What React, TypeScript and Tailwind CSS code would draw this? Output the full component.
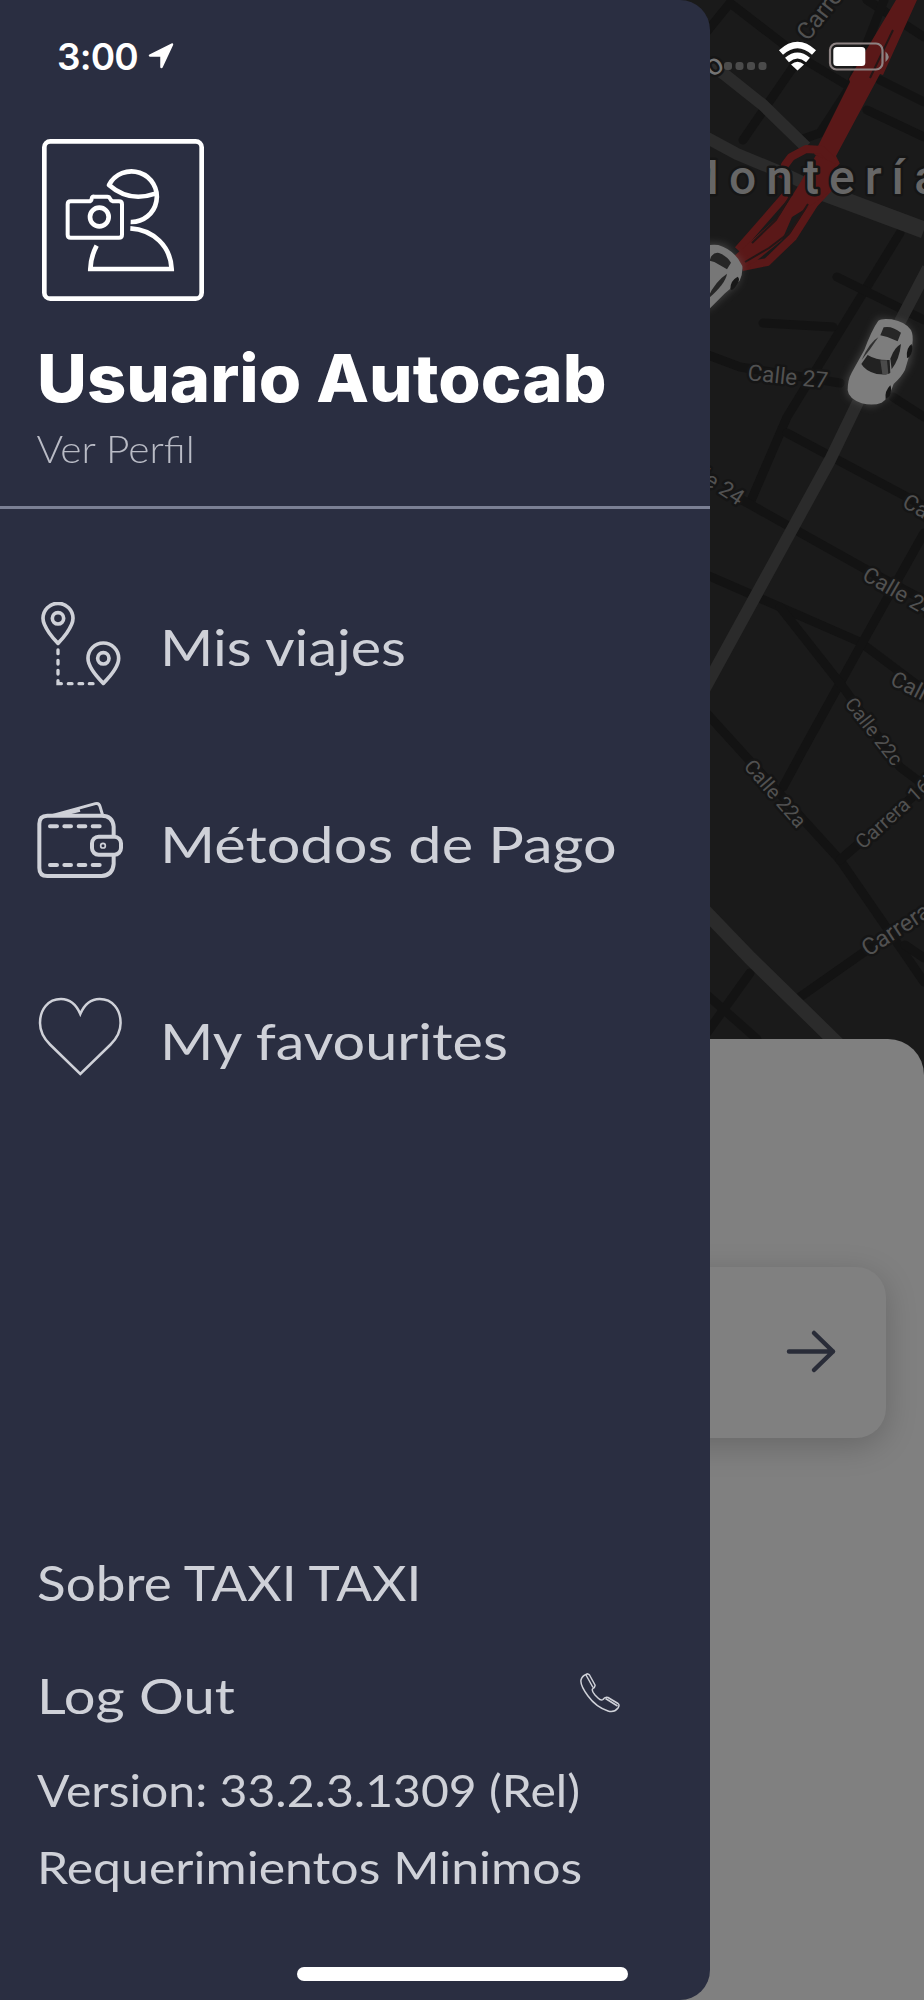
import React from "react";
import { clsx } from "clsx";

const darkStreets = [
  "M700 40L730 3L800 57L850 87",
  "M800 57L743 140",
  "M867 0L924 37",
  "M884 0L850 87L820 133L800 140",
  "M880 80L924 102",
  "M867 110L924 137",
  "M900 233L787 417L750 503",
  "M837 277L924 320",
  "M763 323L833 327",
  "M700 352L740 367L840 383",
  "M893 397L924 417",
  "M787 433L907 497L924 506",
  "M735 496L867 570L924 600",
  "M700 572L860 642L924 690",
  "M924 533L860 647L803 750L783 787",
  "M780 607L843 687L900 767L924 785",
  "M700 706L840 860L900 947L924 982",
  "M840 860L924 787",
  "M800 997L867 950L924 912",
  "M750 973L706 1034",
  "M706 994L757 1039",
  "M905 945L924 958",
];

interface StreetLabel {
  text: string;
  x: number;
  y: number;
  angle: number;
  size: number;
  end?: boolean;
}

const labels: StreetLabel[] = [
  { text: "Carrera", x: 808, y: 42, angle: -52, size: 24 },
  { text: "Calle 27", x: 747, y: 380, angle: 6, size: 22.5 },
  { text: "Calle 24", x: 738, y: 506, angle: 33, size: 22, end: true },
  { text: "Calle 25", x: 901, y: 506, angle: 30, size: 22 },
  { text: "Calle 24", x: 861, y: 579, angle: 30, size: 22 },
  { text: "Calle 23", x: 889, y: 684, angle: 27, size: 22 },
  { text: "Calle 22c", x: 844, y: 704, angle: 52, size: 19.5 },
  { text: "Calle 22a", x: 743, y: 767, angle: 49, size: 20 },
  { text: "Carrera 16b", x: 863, y: 850, angle: -42, size: 20 },
  { text: "Carrera", x: 868, y: 957, angle: -33, size: 23.5 },
];

// Both cars are seen from above, heading down and to the left
const Cars = () => (
  <g transform="translate(705 230) scale(0.3333)">
    <g fill="#777" opacity="0.45" filter="url(#glow)">
      <path d="M0 40L60 45L112 100L100 160L0 245Z" />
      <path d="M520 265L600 280L628 320L615 400L550 500L500 530L430 500L425 450L480 350Z" />
    </g>
    <path d="M-30 60Q10 40 40 45Q90 60 112 108Q114 130 104 152L60 190L0 250H-40Z" fill="#777" />
    <path d="M18 80Q28 66 42 69Q66 78 78 98L66 118Q46 106 28 96L14 92Z" fill="#262626" />
    <path d="M10 200Q30 155 66 131Q62 160 12 204Z" fill="#262626" />
    <path d="M76 176Q76 152 98 140Q106 146 98 160Q88 178 80 180Z" fill="#171717" />
    <path
      d="M520 272Q530 264 560 268Q602 276 618 300Q626 316 622 345L600 420Q590 440 566 462Q552 505 530 518Q505 528 470 520Q430 505 428 480Q428 450 440 428L478 360Q500 300 520 272Z"
      fill="#7d7d7d"
    />
    <path d="M536 292Q560 286 588 308L578 334Q552 320 526 316Z" fill="#262626" />
    <path d="M520 322Q494 336 470 390Q498 356 520 322Z" fill="#303030" />
    <path d="M488 375Q515 392 554 390L556 428Q550 436 515 432Q482 424 469 402Z" fill="#222" />
    <path d="M526 391H546L550 432H532Z" fill="#4a4a4a" />
    <path d="M588 342Q568 352 556 386L560 418Q584 386 588 342Z" fill="#222" />
    <path d="M606 384Q602 354 620 342Q626 366 612 382Z" fill="#151515" />
    <path d="M542 508Q538 484 556 466Q562 478 554 498Z" fill="#151515" />
  </g>
);

const CityMap = () => (
  <svg className="block h-[1080px] w-full shrink-0" viewBox="0 0 924 1080">
    <defs>
      <filter id="glow" x="-50%" y="-50%" width="200%" height="200%">
        <feGaussianBlur stdDeviation="12" />
      </filter>
    </defs>
    <rect width="924" height="1080" fill="#1a1a1a" />
    <g fill="none" stroke="#131313" strokeWidth="9" strokeLinejoin="round" strokeLinecap="round">
      {darkStreets.map((d) => (
        <path key={d} d={d} />
      ))}
    </g>
    <g fill="none" stroke="#2b2b2b" strokeLinejoin="round">
      <path d="M710 64L724 74L763 105L806 147" strokeWidth="12" />
      <path d="M700 134L737 154L783 173L833 197" strokeWidth="12" />
      <path d="M822 192L924 230" strokeWidth="17" />
      <path d="M928 268L859 400L830 460L704 690" strokeWidth="12" />
      <path d="M700 906L750 958L838 1044" strokeWidth="14" />
    </g>
    <g fill="#5a1818">
      <path d="M896 0H917L883 75L880 74L836 156L840 164L824 160L814 154L850 82L849 79Z" />
      <path
        d="M783 178L785 165L791 157L806 149L822 150L835 163L826 172L829 188L814 204L793 237L767 262L742 267M786 195L738 250"
        fill="none"
        stroke="#5a1818"
        strokeWidth="8"
        strokeLinejoin="round"
      />
      <path d="M816 155L836 164L828 174L829 192L813 204L792 217L782 240L755 262L738 270L732 258L780 215L800 183Z" />
    </g>
    <path
      d="M752 243L776 220L790 196M745 262L769 248L790 232L808 204M870 78L893 30"
      stroke="#241616"
      strokeWidth="2"
      fill="none"
    />
    <Cars />
    <g
      className="font-[Roboto,sans-serif]"
      fill="#515151"
      stroke="#151515"
      strokeWidth="5"
      strokeLinejoin="round"
      paintOrder="stroke"
    >
      {labels.map((l) => (
        <text
          key={l.x}
          transform={`translate(${l.x} ${l.y}) rotate(${l.angle})`}
          fontSize={l.size}
          textAnchor={l.end ? "end" : "start"}
        >
          {l.text}
        </text>
      ))}
      <text transform="translate(712 78) rotate(-35)" fontSize="30" fill="#747474">
        o
      </text>
      <text x="677" y="194" fontSize="48" fontWeight="500" letterSpacing="10" fill="#666">
        Montería
      </text>
    </g>
  </svg>
);

const StatusBar = () => (
  <div className="absolute inset-x-0 top-0 flex h-28 items-center pl-[57px] text-white">
    <span className="w-[82px] font-[Inter,sans-serif] text-[37px] font-semibold leading-none tracking-[-0.8px]">3:00</span>
    <svg className="ml-[9px] h-[26px] w-[26px]" viewBox="0 0 26 26" fill="currentColor">
      <path
        d="M24 1.500L2 12.500H13.500V24Z"
        stroke="currentColor"
        strokeWidth="2.500"
        strokeLinejoin="round"
      />
    </svg>
    <svg className="ml-auto h-[36px] w-[204px]" viewBox="720 38 204 36">
      <g fill="#4b4b4b">
        <rect x="724" y="62" width="8" height="8" rx="3" />
        <rect x="735.500" y="62" width="8" height="8" rx="3" />
        <rect x="747" y="62" width="8" height="8" rx="3" />
        <rect x="758.500" y="62" width="8" height="8" rx="3" />
      </g>
      <g fill="none" stroke="white" strokeWidth="6">
        <path d="M781 52.500Q797.500 37.500 814 52.500" />
        <path d="M787 60Q797.500 51 808 60" />
      </g>
      <path d="M791 64.500Q797.500 59 804 64.500L797.500 70.500Z" fill="white" />
      <rect x="830" y="43.500" width="52.500" height="26" rx="6.500" fill="none" stroke="#8d8383" strokeWidth="2.200" />
      <rect x="833.300" y="47" width="32" height="19" rx="3.500" fill="white" />
      <path d="M885.500 51.500Q892 57 885.500 62Z" fill="#8d8383" />
    </svg>
  </div>
);

const AvatarIcon = () => (
  <svg
    className="size-[162px]"
    viewBox="126 418 486 486"
    fill="none"
    stroke="white"
    strokeWidth="14"
  >
    <rect x="133" y="425" width="472" height="472" rx="18" />
    <path d="M392 667A76 76 0 1 0 327 556C370 594 420 598 466 582" strokeLinejoin="round" />
    <path d="M391 686C460 690 512 740 515 808H271C272 780 278 760 290 738" />
    <path
      d="M203 614q0-9 9-9H266q8 0 9-8t8-6H322q6 0 8 6t9 8H357q9 0 9 9V705q0 9-9 9H212q-9 0-9-9Z"
      strokeWidth="12"
    />
    <circle cx="298" cy="652" r="28" />
  </svg>
);

const TripsIcon = () => (
  <svg className="size-[90px]" viewBox="105 64 270 270" fill="none" stroke="currentColor" strokeWidth="11">
    <path d="M174 188C164 178 129 140 129 113A45 45 0 0 1 219 113C219 140 184 178 174 188Z" strokeLinejoin="round" />
    <circle cx="174" cy="113" r="17" />
    <path d="M310 308C300 298 264 260 264 233A46 46 0 0 1 356 233C356 260 320 298 310 308Z" strokeLinejoin="round" />
    <circle cx="310" cy="233" r="17" />
    <path
      d="M174 208V219M174 239V250M174 269V280M174 300V309H184M205 309H216M237 309H248M268 309H279"
      strokeLinecap="round"
      strokeWidth="10"
    />
  </svg>
);

const WalletIcon = () => (
  <svg className="size-[90px]" viewBox="105 655 270 270" fill="none" stroke="currentColor" strokeWidth="12">
    <path d="M341 765V738Q338 705 305 705H142Q118 705 118 729V862Q118 886 142 886H305Q338 884 341 850V826" />
    <path d="M158 704L286 669Q297 666 300 677L308 704M180 704L240 689" strokeWidth="9" />
    <rect x="276" y="768" width="87" height="54" rx="20" />
    <circle cx="309" cy="795" r="7" strokeWidth="5" />
    <path
      d="M150 737H171M193 737H213M236 737H256M278 737H299M150 853H171M193 853H213M236 853H256M278 853H299"
      strokeLinecap="round"
    />
  </svg>
);

const HeartIcon = () => (
  <svg className="size-[90px]" viewBox="0 0 90 90" fill="none" stroke="currentColor" strokeWidth="2.500">
    <path d="M45.300 18C41 8 34 3 26 3C13 3 5 13.500 5 27C5 36 9 42.500 15 48.500L45.300 78L75.600 48.500C81.600 42.500 85.600 36 85.600 27C85.600 13.500 77.600 3 64.600 3C56.600 3 49.600 8 45.300 18Z" />
  </svg>
);

const PhoneIcon = () => (
  <svg className="mb-1 h-10 w-10" viewBox="0 0 40 40" fill="none" stroke="currentColor" strokeWidth="1.500" strokeLinejoin="round">
    <path d="M6 1.500Q8 0 9.500 2L15 12Q15.500 14 12.500 16Q11.500 18 15 22L18 25Q21 28 23 26.500Q25 23.500 28 24.500L38 30.500Q40 32 38 35Q34 40 28 38Q16 34 8 23Q0 12 1 7Q2 3 6 1.500Z" />
    <path d="M6 2L13 14.500M25.500 25.500L37.500 33" />
  </svg>
);

const menuItems = [
  { label: "Mis viajes", icon: <TripsIcon />, stretch: "scale-x-[1.127]" },
  { label: "Métodos de Pago", icon: <WalletIcon />, stretch: "scale-x-[1.166]" },
  { label: "My favourites", icon: <HeartIcon />, stretch: "scale-x-[1.128]" },
];

const Drawer = () => (
  <aside className="relative col-start-1 row-start-1 flex h-[2000px] w-[710px] flex-col overflow-hidden rounded-r-[30px] bg-[#2a2e41] pt-[139px] text-[#cfd1d8]">
    <div className="pl-[42px]">
      <AvatarIcon />
    </div>
    <h1 className="ml-[37px] mt-[37px] origin-left scale-x-[1.04] whitespace-nowrap font-[Inter,sans-serif] text-[66px] font-extrabold leading-[80px] text-white">
      Usuario Autocab
    </h1>
    <p className="mt-1.5 origin-left scale-x-[1.07] pl-[34px] text-[38px] font-light leading-[48px] text-[#b9bbc5]">Ver Perfil</p>
    <div className="mt-[34px] h-[3px] shrink-0 bg-[#7b8094]" />

    <nav className="pt-[39px]">
      {menuItems.map((item) => (
        <a key={item.label} className="flex h-[197px] items-center pl-[35px]">
          {item.icon}
          <span className={clsx("ml-[35px] origin-left whitespace-nowrap text-[51px] leading-[60px]", item.stretch)}>
            {item.label}
          </span>
        </a>
      ))}
    </nav>

    <footer className="mt-auto whitespace-nowrap pb-[106px] pl-[37px]">
      <p className="origin-left scale-x-[1.083] text-[49px] leading-[60px]">Sobre TAXI TAXI</p>
      <div className="mt-[53px] flex items-center justify-between pr-[90px]">
        <span className="origin-left scale-x-[1.145] text-[49px] leading-[60px]">Log Out</span>
        <PhoneIcon />
      </div>
      <p className="mt-[38px] origin-left scale-x-[1.093] text-[44px] leading-[54px]">Version: 33.2.3.1309 (Rel)</p>
      <p className="mt-[23px] origin-left scale-x-[1.136] text-[44px] leading-[54px]">Requerimientos Minimos</p>
    </footer>
  </aside>
);

const App: React.FC = () => {
  return (
    <main className="relative grid h-[2000px] w-[924px] overflow-hidden bg-[#808080] font-[Lato,sans-serif]">
      <div className="col-start-1 row-start-1 flex h-[2000px] flex-col">
        <CityMap />
        <section className="relative -mt-[41px] flex-1 rounded-t-[36px] bg-[#808080] pr-[38px] pt-[228px]">
          <div className="flex h-[171px] items-center justify-end rounded-r-[30px] bg-[#808080] pr-[49px] shadow-[0_8px_32px_rgba(0,0,0,0.2)]">
            <svg className="mb-0.5 h-[46px] w-[54px]" viewBox="0 0 54 46" fill="none" stroke="#292c38" strokeWidth="4.500" strokeLinecap="round" strokeLinejoin="round">
              <path d="M6 22.500H50M31 4L50 22.500L31 41" />
            </svg>
          </div>
        </section>
      </div>
      <Drawer />
      <StatusBar />
      <div className="absolute left-[297px] top-[1967px] h-[14px] w-[331px] rounded-full bg-white" />
    </main>
  );
};

export default App;
